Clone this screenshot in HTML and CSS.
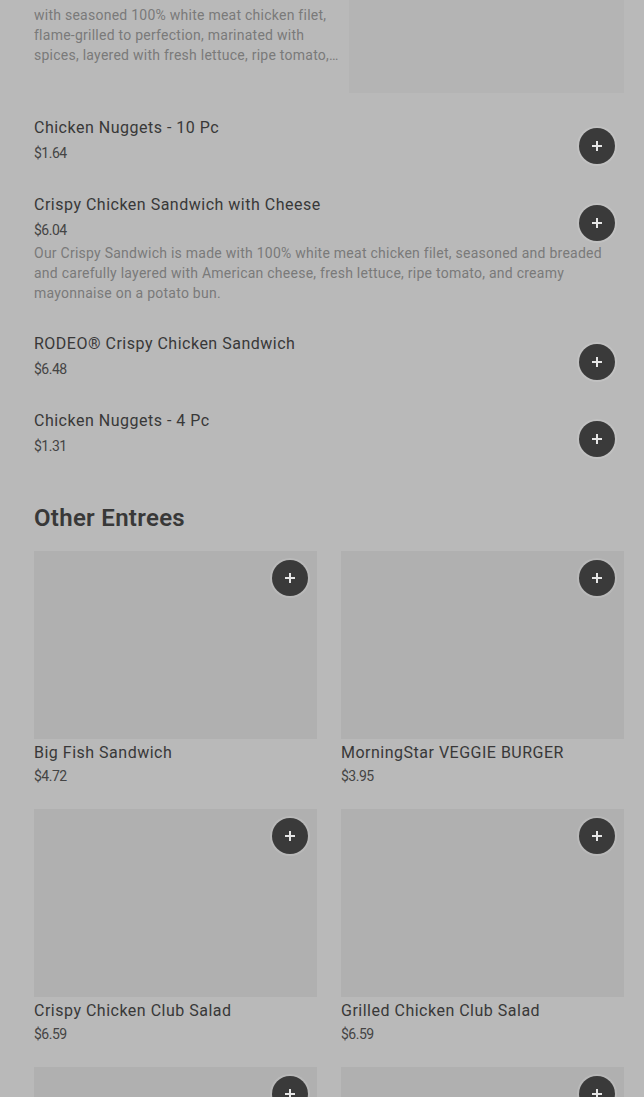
FILE: index.html
```html
<!DOCTYPE html>
<html>
<head>
<meta charset="utf-8">
<link rel="stylesheet" href="styles.css">
</head>
<body>
<main class="page">
  <section class="list">
    <div class="row row-img">
      <div class="info">
        <div class="title">Grilled Chicken Sandwich</div>
        <div class="price">$5.89</div>
        <div class="desc clamp">Our Grilled Chicken Sandwich is made<br>with seasoned 100% white meat chicken filet, flame-grilled to perfection, marinated with spices, layered with fresh lettuce, ripe tomato, and creamy mayonnaise on a potato bun.</div>
      </div>
      <div class="thumb"></div>
    </div>
    <div class="row">
      <div class="title">Chicken Nuggets - 10 Pc</div>
      <div class="price">$1.64</div>
      <button class="add"><svg viewBox="0 0 16 16" width="16" height="16"><path d="M7 3h2v4h4v2H9v4H7V9H3V7h4z" fill="#e6e6e6"/></svg></button>
    </div>
    <div class="row">
      <div class="title">Crispy Chicken Sandwich with Cheese</div>
      <div class="price">$6.04</div>
      <div class="desc">Our Crispy Sandwich is made with 100% white meat chicken filet, seasoned and breaded and carefully layered with American cheese, fresh lettuce, ripe tomato, and creamy mayonnaise on a potato bun.</div>
      <button class="add"><svg viewBox="0 0 16 16" width="16" height="16"><path d="M7 3h2v4h4v2H9v4H7V9H3V7h4z" fill="#e6e6e6"/></svg></button>
    </div>
    <div class="row">
      <div class="title">RODEO® Crispy Chicken Sandwich</div>
      <div class="price">$6.48</div>
      <button class="add"><svg viewBox="0 0 16 16" width="16" height="16"><path d="M7 3h2v4h4v2H9v4H7V9H3V7h4z" fill="#e6e6e6"/></svg></button>
    </div>
    <div class="row">
      <div class="title">Chicken Nuggets - 4 Pc</div>
      <div class="price">$1.31</div>
      <button class="add"><svg viewBox="0 0 16 16" width="16" height="16"><path d="M7 3h2v4h4v2H9v4H7V9H3V7h4z" fill="#e6e6e6"/></svg></button>
    </div>
  </section>

  <h2 class="heading">Other Entrees</h2>

  <section class="grid">
    <div class="card">
      <div class="card-img"><button class="add add-card"><svg viewBox="0 0 16 16" width="16" height="16"><path d="M7 3h2v4h4v2H9v4H7V9H3V7h4z" fill="#e6e6e6"/></svg></button></div>
      <div class="title">Big Fish Sandwich</div>
      <div class="price">$4.72</div>
    </div>
    <div class="card">
      <div class="card-img"><button class="add add-card"><svg viewBox="0 0 16 16" width="16" height="16"><path d="M7 3h2v4h4v2H9v4H7V9H3V7h4z" fill="#e6e6e6"/></svg></button></div>
      <div class="title">MorningStar VEGGIE BURGER</div>
      <div class="price">$3.95</div>
    </div>
    <div class="card">
      <div class="card-img"><button class="add add-card"><svg viewBox="0 0 16 16" width="16" height="16"><path d="M7 3h2v4h4v2H9v4H7V9H3V7h4z" fill="#e6e6e6"/></svg></button></div>
      <div class="title">Crispy Chicken Club Salad</div>
      <div class="price">$6.59</div>
    </div>
    <div class="card">
      <div class="card-img"><button class="add add-card"><svg viewBox="0 0 16 16" width="16" height="16"><path d="M7 3h2v4h4v2H9v4H7V9H3V7h4z" fill="#e6e6e6"/></svg></button></div>
      <div class="title">Grilled Chicken Club Salad</div>
      <div class="price">$6.59</div>
    </div>
    <div class="card">
      <div class="card-img"><button class="add add-card"><svg viewBox="0 0 16 16" width="16" height="16"><path d="M7 3h2v4h4v2H9v4H7V9H3V7h4z" fill="#e6e6e6"/></svg></button></div>
      <div class="title">Whopper</div>
      <div class="price">$5.49</div>
    </div>
    <div class="card">
      <div class="card-img"><button class="add add-card"><svg viewBox="0 0 16 16" width="16" height="16"><path d="M7 3h2v4h4v2H9v4H7V9H3V7h4z" fill="#e6e6e6"/></svg></button></div>
      <div class="title">Impossible Whopper</div>
      <div class="price">$6.99</div>
    </div>
  </section>
</main>
</body>
</html>
```

FILE: styles.css
```css
html, body {
  margin: 0;
  padding: 0;
  background: #b9b9b9;
  overflow: hidden;
}
body {
  font-family: Roboto, "Liberation Sans", sans-serif;
  color: #383838;
}
.page {
  padding: 0 20px 0 34px;
}
.list {
  margin-top: -79px;
}
.row {
  display: grid;
  grid-template-columns: 1fr auto;
  align-items: start;
  padding: 14px 0 15px;
}
.row .title { grid-column: 1; grid-row: 1; }
.row .price { grid-column: 1; grid-row: 2; }
.row .desc { grid-column: 1 / 3; grid-row: 3; }
.row .add { grid-column: 2; grid-row: 1 / 4; }
.row-img {
  display: flex;
  justify-content: space-between;
  padding-bottom: 9px;
}
.row-img .info {
  flex: 0 0 306px;
}
.thumb {
  width: 275px;
  height: 158px;
  background: #b4b4b4;
}
.title {
  font-size: 16px;
  line-height: 24px;
  font-weight: 400;
  letter-spacing: 0.5px;
  color: #383838;
}
.price {
  font-size: 14px;
  line-height: 20px;
  margin-top: 3px;
  letter-spacing: -0.5px;
  color: #444;
}
.desc {
  font-size: 14px;
  line-height: 20px;
  margin-top: 3px;
  letter-spacing: 0.25px;
  color: #7a7a7a;
}
.clamp {
  display: -webkit-box;
  -webkit-line-clamp: 4;
  -webkit-box-orient: vertical;
  overflow: hidden;
}
.add {
  width: 36px;
  height: 36px;
  border-radius: 50%;
  border: 0;
  padding: 0;
  margin: 12px 9px 0 24px;
  background: #3a3a3a;
  box-shadow: 0 0 0 2px rgba(255,255,255,0.12);
  display: flex;
  align-items: center;
  justify-content: center;
}
.heading {
  margin: 30px 0 17px;
  font-size: 24px;
  line-height: 32px;
  font-weight: 600;
  letter-spacing: 0.3px;
  color: #383838;
}
.grid {
  display: grid;
  grid-template-columns: 283px 283px;
  column-gap: 24px;
  row-gap: 23px;
}
.card-img {
  height: 188px;
  background: #b0b0b0;
  display: flex;
  justify-content: flex-end;
  align-items: flex-start;
  margin-bottom: 2px;
}
.add-card {
  margin: 9px 9px 0 0;
}
.card .price {
  margin-top: 1px;
}
```
